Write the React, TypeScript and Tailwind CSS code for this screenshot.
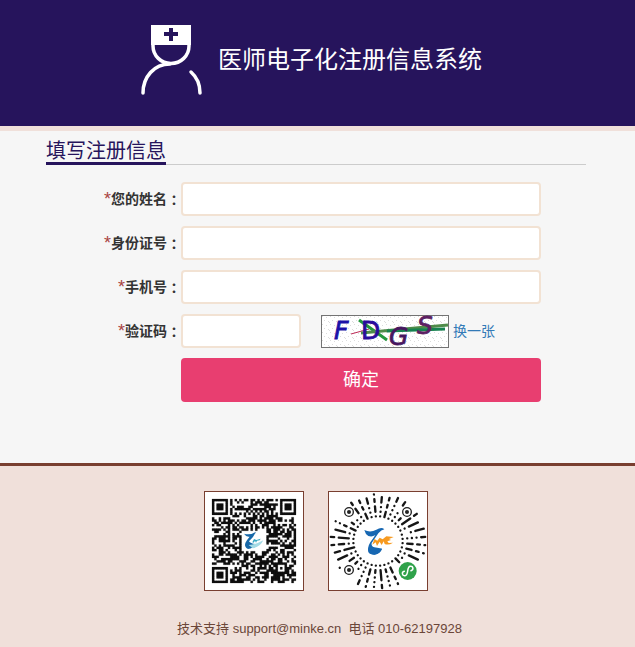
import type { ReactNode } from "react";

const QR_SIZE = 37;

function ringModule(x: number, y: number, cx: number, cy: number, r: number) {
  const d = Math.max(Math.abs(x - cx), Math.abs(y - cy));
  if (d > r + 1) return null;
  if (d === r + 1) return r === 3 ? false : null;
  return d !== r - 1;
}

function isDark(x: number, y: number) {
  const marks = [
    ringModule(x, y, 3, 3, 3),
    ringModule(x, y, QR_SIZE - 4, 3, 3),
    ringModule(x, y, 3, QR_SIZE - 4, 3),
    ringModule(x, y, 30, 30, 2),
  ];
  for (const m of marks) if (m !== null) return m;
  if (Math.abs(x - 18) < 6 && Math.abs(y - 18) < 5) return false;
  if (x === 6 || y === 6) return (x + y) % 2 === 0;
  let h = (x * 374761393 + y * 668265263 + 1013) | 0;
  h = Math.imul(h ^ (h >>> 13), 1274126177);
  return ((h ^ (h >>> 16)) & 255) < 140;
}

function QrCode() {
  const cell = 252 / QR_SIZE;
  let d = "";
  for (let y = 0; y < QR_SIZE; y++)
    for (let x = 0; x < QR_SIZE; x++)
      if (isDark(x, y)) d += `M${36 + x * cell} ${39 + y * cell}h${cell}v${cell}h${-cell}z`;
  return (
    <svg viewBox="15 18 294 294" className="block size-full" role="img" aria-label="公众号二维码">
      <path d={d} fill="#111" stroke="#111" strokeWidth="0.6" />
      <path d="M132 143Q150 149 168 137Q161 153 147 166Q151 173 166 174Q160 187 144 189Q132 183 136 171Q140 162 149 152Q139 154 132 143Z" fill="#1768a8" />
      <path d="M146 177Q166 176 190 163Q181 183 158 187Z" fill="#a5dbe5" />
      <path d="M157 169L162 159L169 162L182 158L179 163L171 164L168 170L165 164L161 170Z" fill="#36a8c2" />
    </svg>
  );
}

const codeEyes = [[75, 78], [249, 78], [75, 252]];
const codeGaps = [[75, 78, 23], [249, 78, 23], [75, 252, 23], [251, 255, 37]];

function MiniProgramCode() {
  const rays: ReactNode[] = [];
  const count = 36;
  for (let i = 0; i < count; i++) {
    const a = ((i + 0.5) * 2 * Math.PI) / count;
    const ux = Math.cos(a);
    const uy = Math.sin(a);
    let r = 74;
    let step = 0;
    while (r < 141) {
      const h = (i * 37 + step * 53 + ((i * i * 7) % 29)) % 11;
      const len = h < 5 ? 0 : h < 8 ? 8 : h < 10 ? 16 : 30;
      const end = Math.min(step === 0 && i % 4 !== 0 ? r : r + len, 142);
      const mx = 162 + (ux * (r + end)) / 2;
      const my = 165 + (uy * (r + end)) / 2;
      const blocked = codeGaps.some(([x, y, rad]) => Math.hypot(mx - x, my - y) < rad);
      if (!blocked && (h !== 3 || step === 0))
        rays.push(
          <line
            key={`${i}-${step}`}
            x1={162 + ux * r}
            y1={165 + uy * r}
            x2={162 + ux * (end + 0.1)}
            y2={165 + uy * (end + 0.1)}
          />,
        );
      r = end + 14;
      step++;
    }
  }
  return (
    <svg viewBox="15 18 294 294" className="block size-full" role="img" aria-label="小程序码">
      <g stroke="#161616" strokeWidth="7" strokeLinecap="round">{rays}</g>
      {codeEyes.map(([x, y]) => (
        <g key={`${x}-${y}`}>
          <circle cx={x} cy={y} r="13" fill="#fff" stroke="#222" strokeWidth="4" />
          <circle cx={x} cy={y} r="6" fill="#222" />
        </g>
      ))}
      <path d="M121 132Q139 141 157 131Q173 122 181 130Q172 132 163 142L143 171Q141 181 151 184Q166 187 174 188Q169 203 151 206Q133 206 132 193Q131 177 146 159L154 147Q145 154 133 150Q124 145 121 132Z" fill="#1767b2" />
      <path d="M133 193Q145 190 174 188Q169 203 151 206Q133 206 133 193Z" fill="#1767b2" />
      <path d="M145 176L151 159L160 164L167 155L176 160L187 151L209 153L195 159L201 162L190 166L194 171L207 170Q193 179 182 174L179 166L173 177L167 167L159 180L155 169Z" fill="#f79a20" />
      <circle cx="251" cy="255" r="27" fill="#2fa24a" />
      <path d="M241 256C232 258 234 270 243 269C255 268 247 244 258 241C268 239 270 251 261 254" fill="none" stroke="#fff" strokeWidth="4.5" strokeLinecap="round" />
    </svg>
  );
}

function NurseIcon() {
  return (
    <svg width="62" height="72" viewBox="0 0 62 72" className="shrink-0" aria-hidden="true">
      <g fill="none" stroke="#fff" strokeWidth="3.5" strokeLinecap="round">
        <path d="M13 19V22A18 17.500 0 0 0 49 22V19" />
        <path d="M30 40C14 40 3 53 3 69" />
        <path d="M51 48Q60 56 60 69" />
      </g>
      <path d="M11 1H51V21H11Z" fill="#fff" />
      <path d="M29 4H33V8H38V12H33V17H29V12H24V8H29Z" fill="#26145c" />
    </svg>
  );
}

function Captcha() {
  return (
    <svg width="128" height="33" viewBox="0 0 128 33" className="shrink-0 overflow-visible" role="img" aria-label="验证码图片">
      <defs>
        <pattern id="specks" width="8" height="8" patternUnits="userSpaceOnUse">
          <path d="M1 1h1v1h-1zM5 2h1v1h-1zM3 5h1v1h-1zM7 6h1v1h-1zM0 7h1v1h-1z" fill="#dcdcdc" />
        </pattern>
      </defs>
      <rect x="0.5" y="0.5" width="127" height="32" fill="#fff" />
      <rect x="0.5" y="0.5" width="127" height="32" fill="url(#specks)" stroke="#737373" />
      <path d="M30 19L48 14" stroke="#bd2855" />
      <path d="M38 5L66 25" stroke="#24983d" strokeWidth="3" />
      <path d="M40 18L127 10" stroke="#4f8b49" strokeWidth="3" />
      <path d="M66 16L124 14" stroke="#168250" strokeWidth="3" />
      <g fontFamily="DejaVu Sans" fontSize="25" strokeWidth="0.8">
        <text x="13" y="24" fontStyle="italic" fill="#1b12a8" stroke="#1b12a8">F</text>
        <text x="40" y="24" fill="#2b0b9c" stroke="#2b0b9c">D</text>
        <text x="68" y="30" fontStyle="italic" fill="#47165f" stroke="#47165f">G</text>
        <text x="96" y="19" fontStyle="italic" fill="#5d1f63" stroke="#5d1f63">S</text>
      </g>
    </svg>
  );
}

function Field({ id, label, children }: { id: string; label: string; children: ReactNode }) {
  return (
    <div className="grid grid-cols-12 items-center">
      <label htmlFor={id} className="col-span-3 flex items-center justify-end whitespace-nowrap text-sm font-bold text-[#333]">
        <span className="text-lg leading-5 font-normal text-[#a94442]">*</span>
        <span>{label}</span>
        <span className="font-['Noto_Sans_CJK_TC',sans-serif]">：</span>
      </label>
      <div className="col-span-8 flex items-center">{children}</div>
    </div>
  );
}

const inputClass =
  "h-[34px] rounded border-2 border-[#f2e2d3] bg-white px-3 text-sm text-[#555] outline-none focus:border-[#d9b99c]";

export default function App() {
  return (
    <div className="min-h-screen bg-[#f6f6f6] font-['Liberation_Sans','Noto_Sans_CJK_SC',sans-serif] text-[#333]">
      <header className="flex h-[131px] justify-center border-b-5 border-[#f0e0da] bg-[#26145c] pt-6 pr-[13px]">
        <div className="flex h-[71px] items-center gap-4">
          <NurseIcon />
          <h1 className="whitespace-nowrap text-2xl font-normal text-white">医师电子化注册信息系统</h1>
        </div>
      </header>

      <main className="ml-[46px] mr-[49px] pb-[61px] pt-2">
        <div className="flex h-[26px] border-b border-[#ccc]">
          <h2 className="h-[26px] border-b-3 border-[#26145c] text-xl leading-6 font-normal text-[#26145c]">填写注册信息</h2>
        </div>
        <form className="flex flex-col gap-[10px] pt-[17px]" onSubmit={(e) => e.preventDefault()}>
          <Field id="name" label="您的姓名">
            <input id="name" type="text" className={`${inputClass} w-full`} />
          </Field>
          <Field id="idcard" label="身份证号">
            <input id="idcard" type="text" className={`${inputClass} w-full`} />
          </Field>
          <Field id="phone" label="手机号">
            <input id="phone" type="tel" className={`${inputClass} w-full`} />
          </Field>
          <Field id="code" label="验证码">
            <input id="code" type="text" className={`${inputClass} mr-5 w-1/3`} />
            <Captcha />
            <a href="#" className="ml-1 whitespace-nowrap text-sm text-[#337ab7]">换一张</a>
          </Field>
          <div className="grid grid-cols-12">
            <button type="submit" className="col-span-8 col-start-4 h-11 rounded bg-[#e83e70] text-lg text-white">
              确定
            </button>
          </div>
        </form>
      </main>

      <footer className="border-t-3 border-[#793f30] bg-[#f0e0da] pb-2 pt-[25px] text-[#6b4638]">
        <div className="flex justify-center gap-6 pr-1">
          <div className="size-[100px] border border-[#793f30] bg-white">
            <QrCode />
          </div>
          <div className="size-[100px] border border-[#793f30] bg-white">
            <MiniProgramCode />
          </div>
        </div>
        <p className="pt-7 pl-1 text-center text-[13px] leading-5">技术支持 support@minke.cn&nbsp; 电话 010-62197928</p>
      </footer>
    </div>
  );
}
